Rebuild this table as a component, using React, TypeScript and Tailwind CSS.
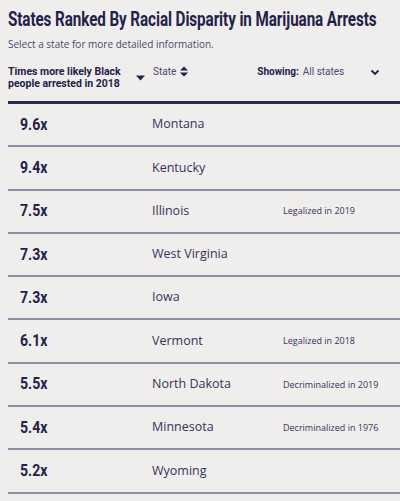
import React from "react";

const rows: { v: string; s: string; n?: string }[] = [
  { v: "9.6x", s: "Montana" },
  { v: "9.4x", s: "Kentucky" },
  { v: "7.5x", s: "Illinois", n: "Legalized in 2019" },
  { v: "7.3x", s: "West Virginia" },
  { v: "7.3x", s: "Iowa" },
  { v: "6.1x", s: "Vermont", n: "Legalized in 2018" },
  { v: "5.5x", s: "North Dakota", n: "Decriminalized in 2019" },
  { v: "5.4x", s: "Minnesota", n: "Decriminalized in 1976" },
  { v: "5.2x", s: "Wyoming" },
];

export default function App() {
  return (
    <div
      className="w-[400px] h-[501px] overflow-hidden bg-[#efeeec] text-[#23214a]"
      style={{ fontFamily: "Roboto, 'Liberation Sans', sans-serif" }}
    >
      <div className="pl-2 pt-[9px]">
        <div className="h-[22px] whitespace-nowrap">
          <span className="inline-block origin-left scale-x-[0.78] text-[19.5px] font-bold leading-[22px] tracking-[-0.1px]">
            States Ranked By Racial Disparity in Marijuana Arrests
          </span>
        </div>
        <div className="mt-[7px] h-[13px] text-[10px] leading-[13px] text-[#4b4970]" style={{ fontFamily: "'Open Sans', sans-serif" }}>
          Select a state for more detailed information.
        </div>
        <div className="mt-[15px] flex items-start h-[31px] text-[10px] leading-[12px] whitespace-nowrap">
          <div className="w-[118px] font-bold text-[10.5px]">
            Times more likely Black
            <br />
            people arrested in 2018
          </div>
          <svg width="9" height="6" viewBox="0 0 9 6" className="ml-[10px] mt-[9px]">
            <path d="M0 0.5h9L4.5 5.5z" fill="#23214a" />
          </svg>
          <div className="ml-[8px] text-[#4b4970]">State</div>
          <svg width="8" height="11" viewBox="0 0 8 11" className="ml-[4px] mt-[0px]">
            <path d="M0 4.5h8L4 0.5z M0 6.5h8L4 10.5z" fill="#23214a" />
          </svg>
          <div className="ml-[69px] flex items-start">
            <span className="font-bold">Showing:</span>
            <span className="ml-[4px] text-[#4b4970]">All states</span>
          </div>
          <svg width="10" height="7" viewBox="0 0 10 7" className="ml-[26px] mt-[3px]">
            <path d="M1.5 1.5L5 5l3.5-3.5" fill="none" stroke="#23214a" strokeWidth="1.8" />
          </svg>
        </div>
      </div>
      <div className="ml-2 mt-[4px] h-[3px] bg-[#2c2a52]" />
      {rows.map((r) => (
        <div key={r.s} className="ml-2">
          <div className="flex items-center h-[41.3px]">
            <div className="w-[144px] pl-3 whitespace-nowrap">
              <span className="inline-block origin-left scale-x-[0.88] text-[16px] font-bold">{r.v}</span>
            </div>
            <div className="w-[131px] text-[12.5px] text-[#35335c]" style={{ fontFamily: "'Open Sans', sans-serif" }}>
              {r.s}
            </div>
            <div className="text-[9px] text-[#35335c]" style={{ fontFamily: "'Open Sans', sans-serif" }}>
              {r.n}
            </div>
          </div>
          <div className="h-[2px] bg-[#908ca9]" />
        </div>
      ))}
    </div>
  );
}
